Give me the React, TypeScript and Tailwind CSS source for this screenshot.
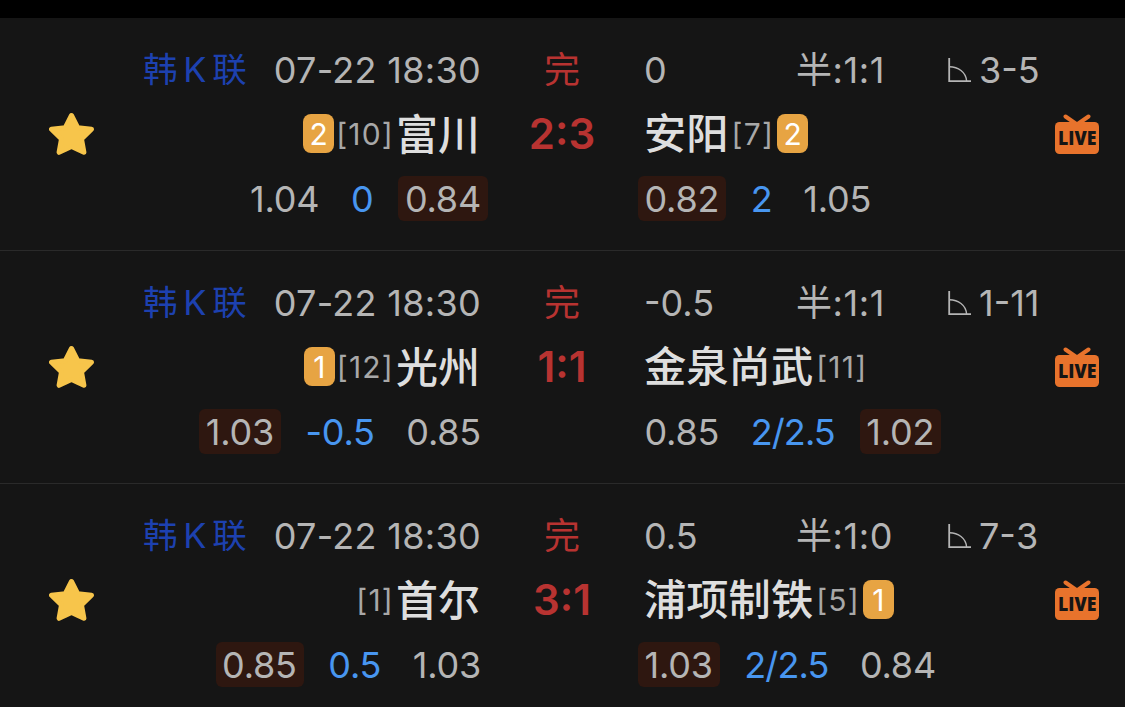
import clsx from 'clsx';

type Odd = {
  value: string;
  hit?: boolean;
};

type Team = {
  name: string;
  rank: number;
  cards?: number;
  odds: Odd[];
};

type Match = {
  id: number;
  league: string;
  time: string;
  score: string;
  handicap: string;
  half: string;
  corner: string;
  home: Team;
  away: Team;
};

const matches: Match[] = [
  {
    id: 1,
    league: '韩K联',
    time: '07-22 18:30',
    score: '2:3',
    handicap: '0',
    half: '1:1',
    corner: '3-5',
    home: { name: '富川', rank: 10, cards: 2, odds: [{ value: '1.04' }, { value: '0' }, { value: '0.84', hit: true }] },
    away: { name: '安阳', rank: 7, cards: 2, odds: [{ value: '0.82', hit: true }, { value: '2' }, { value: '1.05' }] },
  },
  {
    id: 2,
    league: '韩K联',
    time: '07-22 18:30',
    score: '1:1',
    handicap: '-0.5',
    half: '1:1',
    corner: '1-11',
    home: { name: '光州', rank: 12, cards: 1, odds: [{ value: '1.03', hit: true }, { value: '-0.5' }, { value: '0.85' }] },
    away: { name: '金泉尚武', rank: 11, odds: [{ value: '0.85' }, { value: '2/2.5' }, { value: '1.02', hit: true }] },
  },
  {
    id: 3,
    league: '韩K联',
    time: '07-22 18:30',
    score: '3:1',
    handicap: '0.5',
    half: '1:0',
    corner: '7-3',
    home: { name: '首尔', rank: 1, odds: [{ value: '0.85', hit: true }, { value: '0.5' }, { value: '1.03' }] },
    away: { name: '浦项制铁', rank: 5, cards: 1, odds: [{ value: '1.03', hit: true }, { value: '2/2.5' }, { value: '0.84' }] },
  },
];

function StarIcon() {
  return (
    <svg width="46" height="44" viewBox="0 0 46 44" fill="#f7c54b" stroke="#f7c54b" strokeWidth="5" strokeLinejoin="round">
      <path d="M22.5 3.5 L28.7 15.7 L42.5 17.3 L32.5 27 L34.9 40.3 L22.5 34.6 L10.1 40.3 L12.5 27 L2.5 17.3 L16.3 15.7 Z" />
    </svg>
  );
}

function LiveIcon() {
  return (
    <svg width="44" height="41" viewBox="0 0 44 41">
      <path d="M10.5 2.5 L22 10.5 L33.5 2.5" fill="none" stroke="#e8732c" strokeWidth="4" strokeLinecap="round" />
      <rect y="8" width="44" height="32" rx="4.5" fill="#e8732c" />
      <text x="3" y="30.5" textLength="38.5" lengthAdjust="spacingAndGlyphs" className="fill-[#151515] font-['Open_Sans',sans-serif] text-[19px] font-extrabold">
        LIVE
      </text>
    </svg>
  );
}

function CornerIcon() {
  return (
    <svg width="23" height="26" viewBox="0 0 23 26" fill="none" stroke="#b5b5b5">
      <path d="M1.2 1 V24.2 H23" strokeWidth="1.8" />
      <path d="M1.5 9.8 C10 9.8 18 15 18.6 24" strokeWidth="1.4" />
    </svg>
  );
}

function CardBadge({ count }: { count: number }) {
  return (
    <span className="flex h-[39px] w-[31px] items-center justify-center rounded-lg bg-[#e7a443] pt-px text-[30px] text-white">
      {count}
    </span>
  );
}

function Rank({ rank }: { rank: number }) {
  return <span className="pt-px text-[30px] tracking-[1.2px] text-[#a8a8a8] [font-kerning:none]">[{rank}]</span>;
}

function OddsRow({ odds, right }: { odds: Odd[]; right?: boolean }) {
  return (
    <div className={clsx('flex h-[45px] gap-[18px]', right && 'justify-end')}>
      {odds.map((odd, i) => (
        <span
          key={i}
          className={clsx(
            'flex items-center rounded-md pr-[7px] pl-[6.5px]',
            i === 1 ? 'text-[#4896f0]' : 'tracking-[-0.2px] text-[#b5b5b5]',
            i === 1 && (right ? 'tracking-[-0.2px]' : 'tracking-[-0.9px]'),
            odd.hit && 'bg-[#2e1710]'
          )}
        >
          {odd.value}
        </span>
      ))}
    </div>
  );
}

function MatchRow({ match }: { match: Match }) {
  const { home, away } = match;

  return (
    <li className="flex h-[233px] shrink-0 border-b border-[#2a2a2a] pt-[30px]">
      <div className="flex h-[172px] w-[143px] items-center justify-center">
        <StarIcon />
      </div>

      <div className="flex w-[345px] flex-col">
        <div className="flex h-11 items-center justify-between pr-[7px]">
          <span className="text-[34.5px] tracking-[5.8px] text-[#1d41b0]">{match.league}</span>
          <span className="tracking-[0.3px]">{match.time}</span>
        </div>
        <div className="mt-[19px] mb-[21px] flex h-11 items-center justify-end gap-[2px] pr-[8px]">
          {home.cards && <CardBadge count={home.cards} />}
          <Rank rank={home.rank} />
          <span className="pt-[3px] text-[42px] font-medium text-[#dedede]">{home.name}</span>
        </div>
        <OddsRow odds={home.odds} right />
      </div>

      <div className="flex w-[150px] flex-col items-center pr-[2px] text-[#b83331]">
        <div className="flex h-11 items-center">完</div>
        <div className="mt-[20px] flex h-11 items-center text-[42px] font-semibold">{match.score}</div>
      </div>

      <div className="flex w-[391px] flex-col">
        <div className="flex h-11 items-center pl-[6px]">
          <span className="w-[152px] shrink-0">{match.handicap}</span>
          <span className="w-[152px] shrink-0 tracking-[0.6px]">半:{match.half}</span>
          <span className="flex shrink-0 items-center gap-[8px] whitespace-nowrap [font-kerning:none]">
            <CornerIcon />
            {match.corner}
          </span>
        </div>
        <div className="mt-[19px] mb-[21px] flex h-11 items-center gap-[3px] pl-[6px]">
          <span className="pt-[3px] text-[42.3px] font-medium text-[#dedede]">{away.name}</span>
          <Rank rank={away.rank} />
          {away.cards && <CardBadge count={away.cards} />}
        </div>
        <OddsRow odds={away.odds} />
      </div>

      <div className="flex h-[172px] flex-1 items-center justify-center">
        <LiveIcon />
      </div>
    </li>
  );
}

export default function App() {
  return (
    <div className="h-[707px] w-[1125px] overflow-hidden border-t-[18px] border-black bg-[#151515] font-['Inter','Noto_Sans_CJK_SC',sans-serif] text-[36px] leading-none text-[#b5b5b5]">
      <ul className="flex flex-col">
        {matches.map((match) => (
          <MatchRow key={match.id} match={match} />
        ))}
      </ul>
    </div>
  );
}
